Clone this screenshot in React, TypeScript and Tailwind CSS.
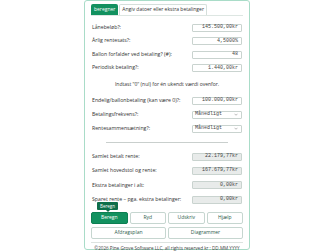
import React from "react";

const FONT = "font-['Open_Sans','Liberation_Sans',sans-serif]";

function Field({ label, value, readOnly }: { label: string; value: string; readOnly?: boolean }) {
  return (
    <div className={`flex items-center justify-between ${readOnly ? "h-[14.4px]" : "h-[13.5px]"}`}>
      <span className="text-[5.2px] text-[#333]">{label}</span>
      <div
        className={`w-[50px] h-[8px] border border-[#c9d3cf] rounded-[1px] flex items-center justify-end pr-[3px] font-['Liberation_Mono',monospace] text-[5px] text-[#444] ${
          readOnly ? "bg-[#e8ebea]" : "bg-white"
        }`}
      >
        {value}
      </div>
    </div>
  );
}

function SelectField({ label, value }: { label: string; value: string }) {
  return (
    <div className="flex items-center justify-between h-[14px]">
      <span className="text-[5.2px] text-[#333]">{label}</span>
      <div className="w-[50px] h-[8px] border border-[#c9d3cf] rounded-[1px] bg-white flex items-center justify-between pl-[2px] pr-[3px] font-['Liberation_Mono',monospace] text-[5px] text-[#444]">
        <span>{value}</span>
        <svg width="4" height="3" viewBox="0 0 8 5" fill="none">
          <path d="M1 1l3 3 3-3" stroke="#777" strokeWidth="1" />
        </svg>
      </div>
    </div>
  );
}

function Btn({ children, primary }: { children: React.ReactNode; primary?: boolean }) {
  return (
    <button
      className={`flex-1 h-[12px] rounded-[2px] text-[5px] flex items-center justify-center ${
        primary
          ? "bg-[#12915f] text-white border border-[#0d7f52]"
          : "bg-white text-[#2d5c4c] border border-[#c6d6d0]"
      }`}
    >
      {children}
    </button>
  );
}

export default function App() {
  return (
    <div className={`w-full h-[251px] bg-white flex justify-center ${FONT}`}>
      <div className="w-[166px] h-[250px] border border-[#a9dcc8] rounded-[3px] px-[6px] pt-[3px] flex flex-col">
        <div className="flex items-end gap-[1px] border-b border-[#dde6e2] h-[12px]">
          <div className="h-[11px] px-[3px] bg-[#12915f] text-white text-[5px] rounded-t-[2px] flex items-center">
            beregner
          </div>
          <div className="h-[11px] px-[2px] border border-b-0 border-[#d5dfdb] text-[5px] text-[#333] rounded-t-[2px] flex items-center">
            Angiv datoer eller ekstra betalinger
          </div>
        </div>

        <div className="px-[1px] pt-[5px]">
          <Field label="Lånebeløb?:" value="145.500,00kr" />
          <Field label="Årlig rentesats?:" value="4,5000%" />
          <Field label="Ballon forfalder ved betaling? (#):" value="48" />
          <Field label="Periodisk betaling?:" value="1.440,00kr" />

          <div className="h-[19px] flex items-center justify-center text-[5px] text-[#333]">
            Indtast "0" (nul) for én ukendt værdi ovenfor.
          </div>

          <Field label="Endelig/ballonbetaling (kan være 0)?:" value="100.000,00kr" />
          <SelectField label="Betalingsfrekvens?:" value="Månedligt" />
          <SelectField label="Rentesammensætning?:" value="Månedligt" />

          <div className="h-[14px] flex items-center justify-center">
            <div className="w-[122px] border-t border-[#c9cfcd]" />
          </div>

          <Field label="Samlet betalt rente:" value="22.179,77kr" readOnly />
          <Field label="Samlet hovedstol og rente:" value="167.679,77kr" readOnly />
          <Field label="Ekstra betalinger i alt:" value="0,00kr" readOnly />
          <Field label="Sparet rente – pga. ekstra betalinger:" value="0,00kr" readOnly />
        </div>

        <div className="relative flex gap-[2px] mt-[5px]">
          <div className="absolute left-[6px] -top-[10px] bg-[#0e6e49] text-white text-[4.5px] px-[3px] h-[8px] rounded-[1px] flex items-center">
            Beregn
            <div className="absolute left-1/2 -bottom-[2px] -translate-x-1/2 w-0 h-0 border-l-[2px] border-r-[2px] border-t-[2px] border-l-transparent border-r-transparent border-t-[#0e6e49]" />
          </div>
          <Btn primary>Beregn</Btn>
          <Btn>Ryd</Btn>
          <Btn>Udskriv</Btn>
          <Btn>Hjælp</Btn>
        </div>
        <div className="flex gap-[2px] mt-[3px]">
          <Btn>Afdragsplan</Btn>
          <Btn>Diagrammer</Btn>
        </div>

        <div className="mt-[3px] border-t border-[#dde3e0] pt-[2px] text-[4.6px] text-[#444] text-center whitespace-nowrap">
          ©2026 Pine Grove Software LLC, all rights reserved kr : DD.MM.YYYY
        </div>
      </div>
    </div>
  );
}
